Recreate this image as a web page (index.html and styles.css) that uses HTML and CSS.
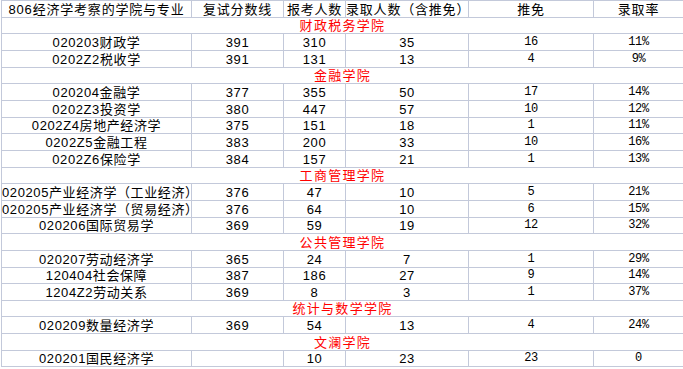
FILE: index.html
```html
<!DOCTYPE html>
<html lang="zh-CN">
<head>
  <meta charset="UTF-8" />
  <meta name="viewport" content="width=device-width, initial-scale=1.0"/>
  <title>806经济学考察的学院与专业</title>
  <link rel="stylesheet" href="styles.css">
</head>
<body>
  <table class="sheet">
    <colgroup>
      <col class="c-major">
      <col class="c-score">
      <col class="c-apply">
      <col class="c-admit">
      <col class="c-exempt">
      <col class="c-rate">
    </colgroup>
    <thead>
      <tr>
        <th>806经济学考察的学院与专业</th>
        <th>复试分数线</th>
        <th>报考人数</th>
        <th>录取人数（含推免）</th>
        <th class="serif">推免</th>
        <th class="serif">录取率</th>
      </tr>
    </thead>
    <tbody>
      <tr class="school"><td colspan="6">财政税务学院</td></tr>
      <tr><td>020203财政学</td><td>391</td><td>310</td><td>35</td><td class="mono">16</td><td class="mono">11%</td></tr>
      <tr><td>0202Z2税收学</td><td>391</td><td>131</td><td>13</td><td class="mono">4</td><td class="mono">9%</td></tr>

      <tr class="school"><td colspan="6">金融学院</td></tr>
      <tr><td>020204金融学</td><td>377</td><td>355</td><td>50</td><td class="mono">17</td><td class="mono">14%</td></tr>
      <tr><td>0202Z3投资学</td><td>380</td><td>447</td><td>57</td><td class="mono">10</td><td class="mono">12%</td></tr>
      <tr><td>0202Z4房地产经济学</td><td>375</td><td>151</td><td>18</td><td class="mono">1</td><td class="mono">11%</td></tr>
      <tr><td>0202Z5金融工程</td><td>383</td><td>200</td><td>33</td><td class="mono">10</td><td class="mono">16%</td></tr>
      <tr><td>0202Z6保险学</td><td>384</td><td>157</td><td>21</td><td class="mono">1</td><td class="mono">13%</td></tr>

      <tr class="school"><td colspan="6">工商管理学院</td></tr>
      <tr><td class="wide">020205产业经济学（工业经济）</td><td>376</td><td>47</td><td>10</td><td class="mono">5</td><td class="mono">21%</td></tr>
      <tr><td class="wide">020205产业经济学（贸易经济）</td><td>376</td><td>64</td><td>10</td><td class="mono">6</td><td class="mono">15%</td></tr>
      <tr><td>020206国际贸易学</td><td>369</td><td>59</td><td>19</td><td class="mono">12</td><td class="mono">32%</td></tr>

      <tr class="school"><td colspan="6">公共管理学院</td></tr>
      <tr><td>020207劳动经济学</td><td>365</td><td>24</td><td>7</td><td class="mono">1</td><td class="mono">29%</td></tr>
      <tr><td>120404社会保障</td><td>387</td><td>186</td><td>27</td><td class="mono">9</td><td class="mono">14%</td></tr>
      <tr><td>1204Z2劳动关系</td><td>369</td><td>8</td><td>3</td><td class="mono">1</td><td class="mono">37%</td></tr>

      <tr class="school"><td colspan="6">统计与数学学院</td></tr>
      <tr><td>020209数量经济学</td><td>369</td><td>54</td><td>13</td><td class="mono">4</td><td class="mono">24%</td></tr>

      <tr class="school"><td colspan="6">文澜学院</td></tr>
      <tr><td>020201国民经济学</td><td></td><td>10</td><td>23</td><td class="mono">23</td><td class="mono">0</td></tr>
    </tbody>
  </table>
</body>
</html>
```

FILE: styles.css
```css
body {
  margin: 0;
  background: #fff;
  font-family: "Liberation Sans", "Noto Sans CJK SC", sans-serif;
  font-size: 13px;
  color: #000;
}
.sheet {
  border-collapse: collapse;
  table-layout: fixed;
  width: 682px;
  margin-left: 1px;
}
.c-major { width: 190px; }
.c-score { width: 92px; }
.c-apply { width: 62px; }
.c-admit { width: 123px; }
.c-exempt { width: 125px; }
.c-rate { width: 90px; }

.sheet th,
.sheet td {
  height: 15.67px;
  padding: 0;
  border: 1px solid #c3c9da;
  text-align: center;
  vertical-align: bottom;
  line-height: 15px;
  font-weight: normal;
  white-space: nowrap;
  letter-spacing: 0.6px;
}
.sheet th {
  letter-spacing: 0.8px;
}
.sheet .wide {
  overflow: visible;
  letter-spacing: 0.6px;
}
.sheet .mono {
  font-family: "Liberation Mono", "Noto Sans CJK SC", monospace;
  font-size: 12px;
  letter-spacing: -0.4px;
}
.school td {
  color: #ff0000;
  letter-spacing: 1.3px;
}
```
